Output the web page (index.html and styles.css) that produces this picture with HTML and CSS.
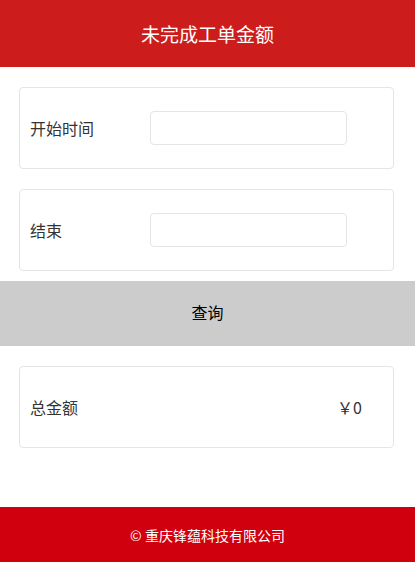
FILE: index.html
```html
<!DOCTYPE html>
<html lang="zh-CN">
<head>
<meta charset="utf-8">
<title>未完成工单金额</title>
<link rel="stylesheet" href="styles.css">
</head>
<body>
<header class="top-bar">未完成工单金额</header>
<main class="content">
  <div class="card">
    <span class="label">开始时间</span>
    <input class="field" type="text">
  </div>
  <div class="card">
    <span class="label">结束</span>
    <input class="field" type="text">
  </div>
</main>
<button class="query-btn" type="button">查询</button>
<div class="content">
  <div class="card card-total">
    <span class="label">总金额</span>
    <span class="value">￥0</span>
  </div>
</div>
<footer class="bottom-bar">© 重庆锋蕴科技有限公司</footer>
</body>
</html>
```

FILE: styles.css
```css
html, body {
  margin: 0;
  padding: 0;
  background: #ffffff;
}
body {
  font-family: "Noto Sans CJK SC", "Noto Sans", sans-serif;
  color: #333333;
  width: 415px;
}
.top-bar {
  box-sizing: border-box;
  height: 67px;
  padding-bottom: 1px;
  background: #cc1c1c;
  color: #ffffff;
  font-size: 19px;
  display: flex;
  align-items: center;
  justify-content: center;
}
.content {
  margin: 0 21px 0 19px;
  padding-top: 20px;
  display: flex;
  flex-direction: column;
  gap: 20px;
}
.card {
  box-sizing: border-box;
  height: 82px;
  border: 1px solid #e5e5e5;
  border-radius: 4px;
  padding: 0 10px;
  display: flex;
  align-items: center;
}
.label {
  width: 120px;
  font-size: 16px;
  color: #333333;
  flex-shrink: 0;
}
.field {
  box-sizing: border-box;
  width: 197px;
  height: 34px;
  border: 1px solid #e5e5e5;
  border-radius: 4px;
  margin: 0;
  padding: 0 8px;
  background: #ffffff;
  outline: none;
}
.card-total {
  justify-content: space-between;
}
.value {
  font-size: 16px;
  color: #333333;
  margin-right: 21px;
}
.query-btn {
  box-sizing: border-box;
  display: flex;
  align-items: center;
  justify-content: center;
  width: 100%;
  height: 65px;
  margin-top: 10px;
  border: none;
  background: #cccccc;
  color: #000000;
  font-family: "Noto Sans CJK SC", "Noto Sans", sans-serif;
  font-size: 16px;
  padding: 0 0 3px 0;
}
.bottom-bar {
  margin-top: 59px;
  height: 55px;
  background: #d0000f;
  color: #ffffff;
  font-size: 14px;
  display: flex;
  align-items: center;
  justify-content: center;
}
```
